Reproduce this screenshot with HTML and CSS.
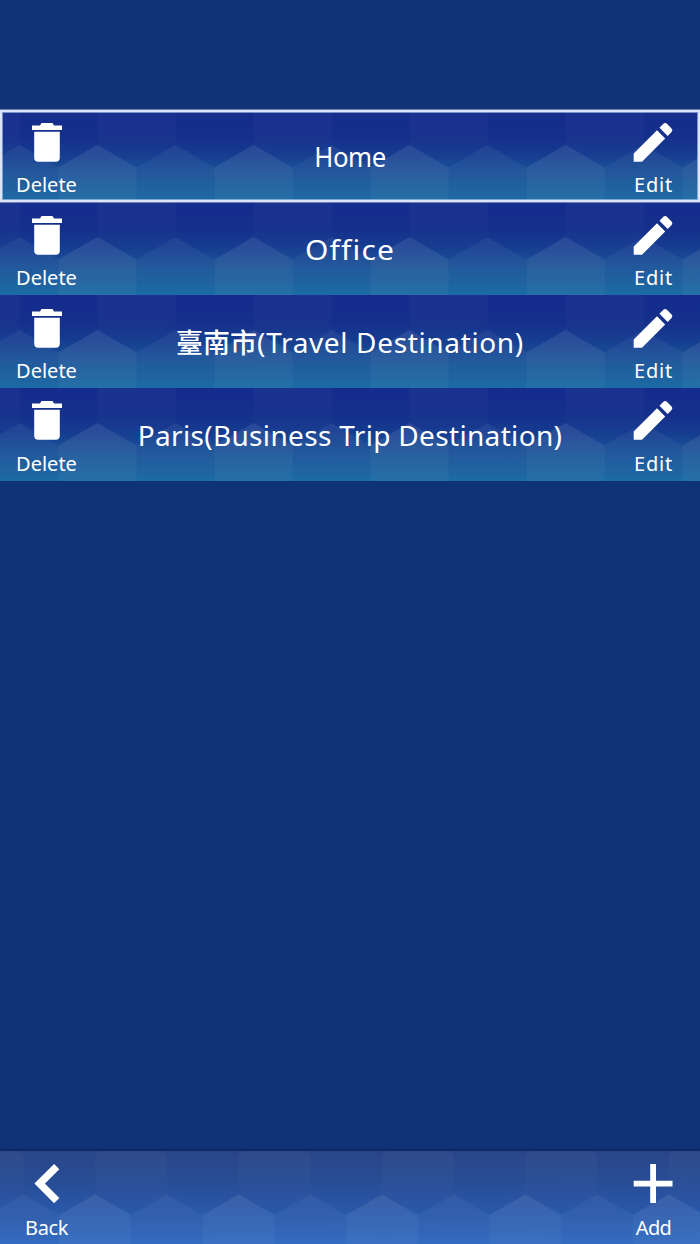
FILE: index.html
```html
<!DOCTYPE html>
<html lang="en">
<head>
    <meta charset="utf-8">
    <title>Locations</title>
    <link rel="stylesheet" href="styles.css">
</head>
<body>
<!-- shared shapes -->
<svg class="defs" width="0" height="0">
    <defs>
        <linearGradient id="fade-row" gradientUnits="userSpaceOnUse" x1="0" y1="35" x2="0" y2="93">
            <stop offset="0" stop-color="#fff" stop-opacity=".065"/>
            <stop offset="1" stop-color="#fff" stop-opacity="0"/>
        </linearGradient>
        <linearGradient id="fade-bar" gradientUnits="userSpaceOnUse" x1="0" y1="43" x2="0" y2="94">
            <stop offset="0" stop-color="#fff" stop-opacity=".055"/>
            <stop offset="1" stop-color="#fff" stop-opacity="0"/>
        </linearGradient>
        <linearGradient id="fade-hex" gradientUnits="userSpaceOnUse" x1="0" y1="0" x2="0" y2="60">
            <stop offset="0" stop-color="#fff" stop-opacity=".03"/>
            <stop offset="1" stop-color="#fff" stop-opacity="0"/>
        </linearGradient>
        <pattern id="hex-row" x="19.5" width="156" height="93" patternUnits="userSpaceOnUse">
            <path fill="url(#fade-hex)" d="M78 0h78v35l-39 22.500L78 35z"/>
            <path fill="url(#fade-row)" d="M0 35l39 22.500L78 35l39 22.500L156 35V93H0z"/>
            <path class="hex-low" d="M39 93V57.500L78 35l39 22.500V93z"/>
        </pattern>
        <pattern id="hex-bar" x="23.5" width="143.4" height="94" patternUnits="userSpaceOnUse">
            <path fill="url(#fade-hex)" d="M71.700 3l5-3h61.700l5 3v40.500l-35.900 20.500-35.800-20.500z"/>
            <path fill="url(#fade-bar)" d="M0 43.500L35.800 64l35.900-20.500L107.500 64l35.900-20.500V94H0z"/>
            <path class="hex-low" d="M35.800 94V64l35.900-20.500L107.500 64v30z"/>
        </pattern>
        <symbol id="trash" viewBox="0 0 40 40">
            <path d="M5 2.500h8L14.500 0h11L27 2.500h8V7H5zM7.200 8.700h25.600v26c0 2.500-1.500 4-4 4H11.200c-2.500 0-4-1.500-4-4z"/>
        </symbol>
        <symbol id="pencil" viewBox="0 0 40 40">
            <path d="M.7 30.500L24 7.200l8.200 8.200L9 38.700H.7zM26.500 4.700L30.100 1.100q2-2 4 0l4.200 4.200q2 2 0 4l-3.600 3.600z"/>
        </symbol>
    </defs>
</svg>
<div class="screen">
    <ul class="list">
        <li class="row selected">
            <svg class="pattern"><rect width="700" height="93" fill="url(#hex-row)"/></svg>
            <div class="btn"><svg class="icon trash"><use href="#trash"/></svg><span class="label">Delete</span></div>
            <div class="name home">Home</div>
            <div class="btn"><svg class="icon"><use href="#pencil"/></svg><span class="label edit">Edit</span></div>
        </li>
        <li class="row">
            <svg class="pattern"><rect width="700" height="93" fill="url(#hex-row)"/></svg>
            <div class="btn"><svg class="icon trash"><use href="#trash"/></svg><span class="label">Delete</span></div>
            <div class="name office">Office</div>
            <div class="btn"><svg class="icon"><use href="#pencil"/></svg><span class="label edit">Edit</span></div>
        </li>
        <li class="row">
            <svg class="pattern"><rect width="700" height="93" fill="url(#hex-row)"/></svg>
            <div class="btn"><svg class="icon trash"><use href="#trash"/></svg><span class="label">Delete</span></div>
            <div class="name travel"><span class="cjk">臺南市</span>(Travel Destination)</div>
            <div class="btn"><svg class="icon"><use href="#pencil"/></svg><span class="label edit">Edit</span></div>
        </li>
        <li class="row">
            <svg class="pattern"><rect width="700" height="93" fill="url(#hex-row)"/></svg>
            <div class="btn"><svg class="icon trash"><use href="#trash"/></svg><span class="label">Delete</span></div>
            <div class="name business">Paris(Business Trip Destination)</div>
            <div class="btn"><svg class="icon"><use href="#pencil"/></svg><span class="label edit">Edit</span></div>
        </li>
    </ul>
    <div class="bar">
        <svg class="pattern"><rect width="700" height="94" fill="url(#hex-bar)"/></svg>
        <div class="btn">
            <svg class="icon" viewBox="0 0 40 40"><path class="chevron" d="M30.700 2.600L13.700 19.600l17 17"/></svg>
            <span class="label back">Back</span>
        </div>
        <div class="btn">
            <svg class="icon" viewBox="0 0 40 40"><path d="M17.200 0h5.800v16.700H39.500v5.800H23v16.500h-5.800V22.500H.7v-5.800h16.500z"/></svg>
            <span class="label add">Add</span>
        </div>
    </div>
</div>
</body>
</html>
```

FILE: styles.css
```css
body {
    margin: 0;
    background: #103378;
    color: #fff;
    font-family: "Noto Sans", "Noto Sans CJK TC", sans-serif;
}
.defs { display: block; }
.screen {
    display: flex;
    flex-direction: column;
    justify-content: space-between;
    box-sizing: border-box;
    height: 1244px;
    padding-top: 109.6px;
    overflow: hidden;
}
.list {
    margin: 0;
    padding: 0;
    list-style: none;
}
.row, .bar {
    position: relative;
    display: flex;
    justify-content: space-between;
}
.row {
    height: 92.8px;
    background: linear-gradient(#152c8d 0%, #15308c 30%, #153c90 48%, #1b5298 68%, #1c6ba5 100%);
}
.row.selected {
    z-index: 1;
}
.row.selected::after {
    content: "";
    position: absolute;
    inset: 0;
    border: 2px solid #dbe5f7;
    box-shadow: 0 0 0 1px rgba(190, 208, 240, .5), inset 0 0 0 1px rgba(190, 208, 240, .6);
}
.bar {
    height: 93px;
    background: linear-gradient(#294587 0%, #284e97 35%, #2956a6 60%, #326bc0 100%);
    box-shadow: 0 -1px 3px #0a2156;
}
.pattern {
    position: absolute;
    top: 0;
    left: 0;
    width: 100%;
    height: 100%;
}
.hex-low { fill: rgba(255, 255, 255, .035); }
.btn {
    position: relative;
    display: flex;
    flex-direction: column;
    align-items: center;
    width: 93px;
    padding-top: 13.4px;
    box-sizing: border-box;
}
.icon {
    width: 40px;
    height: 40px;
    margin-left: -1px;
    fill: #fff;
}
.icon.trash { margin-left: 0; }
.chevron {
    fill: none;
    stroke: #fff;
    stroke-width: 7.4;
}
.label {
    margin-top: 8.5px;
    font-size: 20px;
    line-height: 28px;
    white-space: nowrap;
}
.edit { letter-spacing: .8px; }
.bar .label { margin-top: 10px; }
.back { letter-spacing: -.4px; }
.add { letter-spacing: -.7px; }
.name {
    position: relative;
    flex: 1;
    font-size: 28px;
    line-height: 94px;
    text-align: center;
    white-space: nowrap;
}
.home {
    line-height: 93px;
    letter-spacing: -.5px;
    transform: scaleX(.92);
}
.office {
    letter-spacing: 1.1px;
    transform: scaleX(1.07);
}
.travel { letter-spacing: .65px; }
.business { letter-spacing: .33px; }
.cjk {
    font-family: "Noto Sans CJK TC", sans-serif;
    font-size: 27px;
    font-weight: 500;
    letter-spacing: 0;
    line-height: 1;
}
```
